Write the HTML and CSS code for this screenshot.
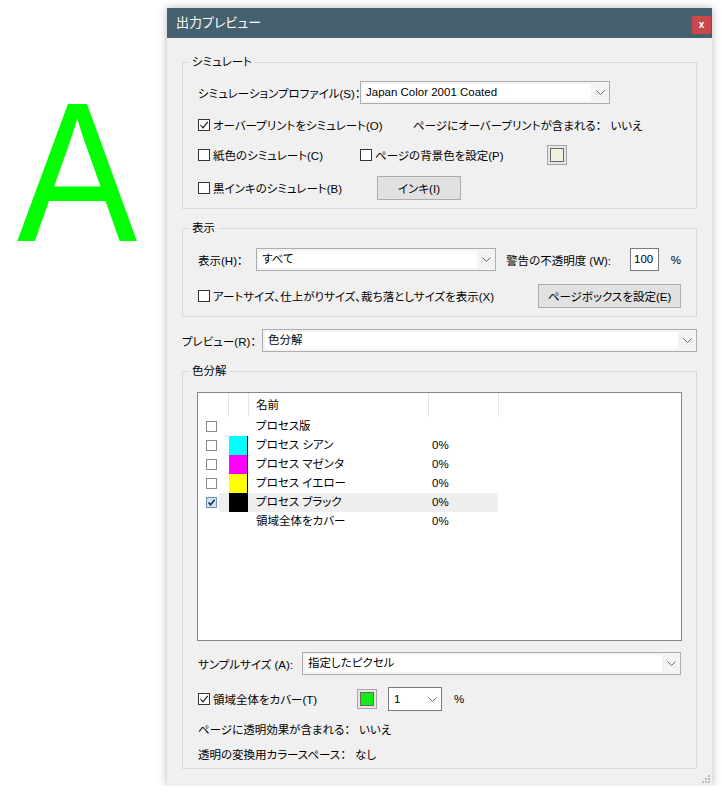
FILE: index.html
```html
<!DOCTYPE html>
<html lang="ja">
<head>
<meta charset="UTF-8">
<meta name="viewport" content="width=device-width, initial-scale=1.0">
<title>出力プレビュー</title>
<link rel="stylesheet" href="styles.css">
</head>
<body>
<div class="page">
    <div class="mark">A</div>

    <div class="dialog">
        <div class="titlebar">
            <span class="title">出力プレビュー</span>
            <span class="close">x</span>
        </div>

        <div class="dialog-body">
            <fieldset class="group">
                <legend>シミュレート</legend>
                <div class="group-body sim">
                    <div class="row r1">
                        <span class="cell w162">シミュレーションプロファイル(S)：</span>
                        <div class="select sel-profile">
                            <span class="value">Japan Color 2001 Coated</span>
                            <span class="arrow"><svg width="9" height="5" viewBox="0 0 9 5"><polyline points="0.5,0.5 4.5,4.5 8.5,0.5" fill="none" stroke="#6a6a6a"/></svg></span>
                        </div>
                    </div>
                    <div class="row r2">
                        <span class="cell w215"><span class="cb on"><svg width="10" height="10" viewBox="0 0 10 10"><polyline points="1.5,5 4,7.8 8.8,1.8" fill="none" stroke="#111" stroke-width="1.1"/></svg></span>オーバープリントをシミュレート(O)</span>
                        <span>ページにオーバープリントが含まれる：</span><span class="answer">いいえ</span>
                    </div>
                    <div class="row r3">
                        <span class="cell w162"><span class="cb"></span>紙色のシミュレート(C)</span>
                        <span class="cell w187"><span class="cb"></span>ページの背景色を設定(P)</span>
                        <span class="swatch"><span class="chip paper"></span></span>
                    </div>
                    <div class="row r4">
                        <span class="cell w179"><span class="cb"></span>黒インキのシミュレート(B)</span>
                        <span class="button btn-ink">インキ(I)</span>
                    </div>
                </div>
            </fieldset>

            <fieldset class="group g-show">
                <legend>表示</legend>
                <div class="group-body show">
                    <div class="row s1">
                        <span class="cell w58">表示(H)：</span>
                        <div class="select sel-show">
                            <span class="value">すべて</span>
                            <span class="arrow"><svg width="9" height="5" viewBox="0 0 9 5"><polyline points="0.5,0.5 4.5,4.5 8.5,0.5" fill="none" stroke="#6a6a6a"/></svg></span>
                        </div>
                        <span class="cell w124 warn">警告の不透明度 (W):</span>
                        <span class="input">100</span>
                        <span class="pct">%</span>
                    </div>
                    <div class="row s2">
                        <span class="cell"><span class="cb"></span>アートサイズ、仕上がりサイズ、裁ち落としサイズを表示(X)</span>
                        <span class="button btn-box">ページボックスを設定(E)</span>
                    </div>
                </div>
            </fieldset>

            <div class="row preview">
                <span class="cell w80">プレビュー(R)：</span>
                <div class="select sel-preview">
                    <span class="value">色分解</span>
                    <span class="arrow"><svg width="9" height="5" viewBox="0 0 9 5"><polyline points="0.5,0.5 4.5,4.5 8.5,0.5" fill="none" stroke="#6a6a6a"/></svg></span>
                </div>
            </div>

            <fieldset class="group g-sep">
                <legend>色分解</legend>
                <div class="group-body sep">
                    <div class="list">
                        <div class="list-head">
                            <span class="hc hc1"></span>
                            <span class="hc hc2"></span>
                            <span class="hc hc3">名前</span>
                            <span class="hc hc4"></span>
                        </div>
                        <div class="list-row">
                            <span class="lc"><span class="cb small"></span></span>
                            <span class="lr"><span class="gap"></span><span class="plate"></span><span class="name">プロセス版</span><span class="amount"></span></span>
                        </div>
                        <div class="list-row">
                            <span class="lc"><span class="cb small"></span></span>
                            <span class="lr"><span class="gap"></span><span class="plate cyan"></span><span class="name">プロセス シアン</span><span class="amount">0%</span></span>
                        </div>
                        <div class="list-row">
                            <span class="lc"><span class="cb small"></span></span>
                            <span class="lr"><span class="gap"></span><span class="plate magenta"></span><span class="name">プロセス マゼンタ</span><span class="amount">0%</span></span>
                        </div>
                        <div class="list-row">
                            <span class="lc"><span class="cb small"></span></span>
                            <span class="lr"><span class="gap"></span><span class="plate yellow"></span><span class="name">プロセス イエロー</span><span class="amount">0%</span></span>
                        </div>
                        <div class="list-row">
                            <span class="lc"><span class="cb small on"><svg width="9" height="9" viewBox="0 0 9 9"><polyline points="1.5,4.5 3.6,6.8 7.6,1.8" fill="none" stroke="#1b2f57" stroke-width="1.6"/></svg></span></span>
                            <span class="lr selected"><span class="gap"></span><span class="plate black"></span><span class="name">プロセス ブラック</span><span class="amount">0%</span></span>
                        </div>
                        <div class="list-row">
                            <span class="lc"></span>
                            <span class="lr"><span class="gap"></span><span class="plate"></span><span class="name">領域全体をカバー</span><span class="amount">0%</span></span>
                        </div>
                    </div>

                    <div class="row t1">
                        <span class="cell w104">サンプルサイズ (A):</span>
                        <div class="select sel-sample">
                            <span class="value">指定したピクセル</span>
                            <span class="arrow"><svg width="9" height="5" viewBox="0 0 9 5"><polyline points="0.5,0.5 4.5,4.5 8.5,0.5" fill="none" stroke="#6a6a6a"/></svg></span>
                        </div>
                    </div>
                    <div class="row t2">
                        <span class="cell w159"><span class="cb on"><svg width="10" height="10" viewBox="0 0 10 10"><polyline points="1.5,5 4,7.8 8.8,1.8" fill="none" stroke="#111" stroke-width="1.1"/></svg></span>領域全体をカバー(T)</span>
                        <span class="swatch"><span class="chip green"></span></span>
                        <div class="select sel-num">
                            <span class="value">1</span>
                            <span class="arrow"><svg width="9" height="5" viewBox="0 0 9 5"><polyline points="0.5,0.5 4.5,4.5 8.5,0.5" fill="none" stroke="#6a6a6a"/></svg></span>
                        </div>
                        <span class="pct">%</span>
                    </div>
                    <div class="row t3">
                        <span>ページに透明効果が含まれる：</span><span class="answer">いいえ</span>
                    </div>
                    <div class="row t4">
                        <span>透明の変換用カラースペース：</span><span class="answer">なし</span>
                    </div>
                </div>
            </fieldset>

            <div class="grip-row">
                <svg width="8" height="8" viewBox="0 0 8 8" fill="#bcbcbc">
                    <rect x="6" y="0" width="2" height="2"/>
                    <rect x="3" y="3" width="2" height="2"/>
                    <rect x="6" y="3" width="2" height="2"/>
                    <rect x="0" y="6" width="2" height="2"/>
                    <rect x="3" y="6" width="2" height="2"/>
                    <rect x="6" y="6" width="2" height="2"/>
                </svg>
            </div>
        </div>
    </div>
</div>
</body>
</html>
```

FILE: styles.css
```css
body {
    margin: 0;
    background: #fff;
    font-family: "Liberation Sans", "Noto Sans CJK JP", sans-serif;
    font-size: 11.5px;
    font-feature-settings: "palt";
    color: #000;
}
.page {
    display: flex;
    align-items: flex-start;
}

/* big green letter on the left */
.mark {
    width: 167px;
    box-sizing: border-box;
    padding: 74px 0 0 17px;
    font-family: "Liberation Sans", sans-serif;
    font-size: 198px;
    line-height: 1;
    color: #00ff00;
    transform: scaleX(0.91);
    transform-origin: 17px 0;
}

.dialog {
    width: 545px;
    height: 778px;
    margin-top: 8px;
    background: #f0f0f0;
    box-shadow: 0 0 9px rgba(0, 0, 0, 0.28);
    display: flex;
    flex-direction: column;
}
.titlebar {
    height: 30px;
    background: #45606f;
    display: flex;
    align-items: flex-start;
    justify-content: space-between;
    padding: 0 1px 0 9px;
}
.title {
    color: #fff;
    font-size: 13px;
    line-height: 30px;
}
.close {
    width: 19px;
    height: 18px;
    margin-top: 8px;
    background: #c8484b;
    color: #fff;
    font-size: 10px;
    font-weight: bold;
    line-height: 17px;
    text-align: center;
}

.dialog-body {
    flex: 1;
    padding: 15px 15px 0 15px;
    display: flex;
    flex-direction: column;
}

.group {
    margin: 0;
    padding: 0;
    min-width: 0;
    border: 1px solid #dadada;
}
.group legend {
    margin-left: 6px;
    padding: 0 3px;
    line-height: 18px;
}
.group-body {
    padding: 0 15px;
}
.group-body.sim { padding-top: 10px; padding-bottom: 8px; }
.group-body.show { padding-top: 11px; padding-bottom: 8px; }
.group-body.sep { padding: 12px 14px 5px 14px; }
.g-show { margin-top: 10px; }
.g-sep { margin-top: 10px; }

.row {
    display: flex;
    align-items: center;
    white-space: nowrap;
}
.cell {
    display: flex;
    align-items: center;
    flex-shrink: 0;
}
.w58 { width: 58px; }
.w80 { width: 80px; }
.w104 { width: 104px; }
.w124 { width: 124px; }
.w159 { width: 159px; }
.w162 { width: 162px; }
.w179 { width: 179px; }
.w187 { width: 187px; }
.w215 { width: 215px; }

.r1 { height: 23px; }
.r2 { height: 22px; margin-top: 10px; }
.r3 { height: 22px; margin-top: 8px; }
.r4 { height: 24px; margin-top: 10px; }
.s1 { height: 23px; }
.s2 { height: 24px; margin-top: 13px; }
.preview { height: 23px; margin-top: 12px; }
.t1 { height: 23px; margin-top: 11px; padding-left: 1px; }
.t2 { height: 24px; margin-top: 12px; padding-left: 1px; }
.t3 { height: 18px; margin-top: 9px; padding-left: 1px; }
.t4 { height: 18px; margin-top: 7px; padding-left: 1px; }

.answer { margin-left: 9px; }
.warn { margin-left: 10px; }
.pct { margin-left: 12px; }

/* checkboxes */
.cb {
    width: 12px;
    height: 12px;
    box-sizing: border-box;
    border: 1px solid #333;
    background: #fff;
    margin-right: 3px;
    display: inline-flex;
    align-items: center;
    justify-content: center;
    flex-shrink: 0;
}
.cb.small {
    width: 11px;
    height: 11px;
    border-color: #8a8a8a;
    margin: 0 0 0 8px;
}
.cb.small.on {
    background: #cfe3f6;
    border-color: #6d8fb3;
}

/* combo boxes */
.select {
    height: 23px;
    box-sizing: border-box;
    border: 1px solid #adadad;
    background: #f3f3f3;
    padding: 2px 0 2px 2px;
    display: flex;
}
.select .value {
    flex: 1;
    background: #fff;
    padding-left: 3px;
    line-height: 17px;
    overflow: hidden;
}
.select .arrow {
    width: 18px;
    display: flex;
    align-items: center;
    justify-content: center;
}
.sel-profile { width: 250px; }
.sel-show { width: 243px; }
.sel-preview { flex: 1; }
.sel-sample { flex: 1; margin-right: 1px; }
.sel-num {
    width: 54px;
    height: 24px;
    margin-left: 11px;
    border-color: #7a7a7a;
    background: #fff;
}
.sel-num .value { line-height: 18px; }

.input {
    width: 29px;
    height: 23px;
    box-sizing: border-box;
    border: 1px solid #7a7a7a;
    background: #fff;
    padding-left: 3px;
    line-height: 21px;
}

.button {
    height: 24px;
    box-sizing: border-box;
    border: 1px solid #adadad;
    background: #e1e1e1;
    display: flex;
    align-items: center;
    justify-content: center;
}
.btn-ink { width: 84px; }
.btn-box { width: 143px; margin-left: auto; }

/* colour chips */
.swatch {
    width: 20px;
    height: 20px;
    box-sizing: border-box;
    border: 1px solid #a6a6a6;
    background: #e6e6e6;
    display: flex;
    align-items: center;
    justify-content: center;
    flex-shrink: 0;
}
.chip {
    width: 14px;
    height: 14px;
    box-sizing: border-box;
    border: 1px solid #6a6a6a;
}
.chip.paper { background: #f1f0dc; }
.chip.green { background: #12ec12; }

/* separations list */
.list {
    height: 249px;
    box-sizing: border-box;
    border: 1px solid #828790;
    background: #fff;
}
.list-head {
    height: 24px;
    display: flex;
}
.hc {
    box-sizing: border-box;
    border-right: 1px solid #e5e5e5;
    line-height: 24px;
}
.hc1 { width: 31px; }
.hc2 { width: 20px; }
.hc3 { width: 180px; padding-left: 7px; }
.hc4 { width: 70px; }
.list-row {
    height: 19px;
    display: flex;
    line-height: 19px;
}
.lc {
    width: 21px;
    display: flex;
    align-items: center;
}
.lr {
    display: flex;
}
.lr.selected { background: #efefef; }
.gap { width: 10px; }
.plate {
    width: 19px;
    box-sizing: border-box;
}
.plate.cyan { background: #00ffff; border-right: 1px solid #000; }
.plate.magenta { background: #ff00ff; border-right: 1px solid #000; }
.plate.yellow { background: #ffff00; border-right: 1px solid #000; }
.plate.black { background: #000; }
.name { width: 180px; padding-left: 8px; box-sizing: border-box; }
.amount { width: 70px; padding-left: 4px; box-sizing: border-box; }

.grip-row {
    margin-top: auto;
    display: flex;
    justify-content: flex-end;
    padding: 0 2px 3px 0;
    margin-right: -15px;
}
```
